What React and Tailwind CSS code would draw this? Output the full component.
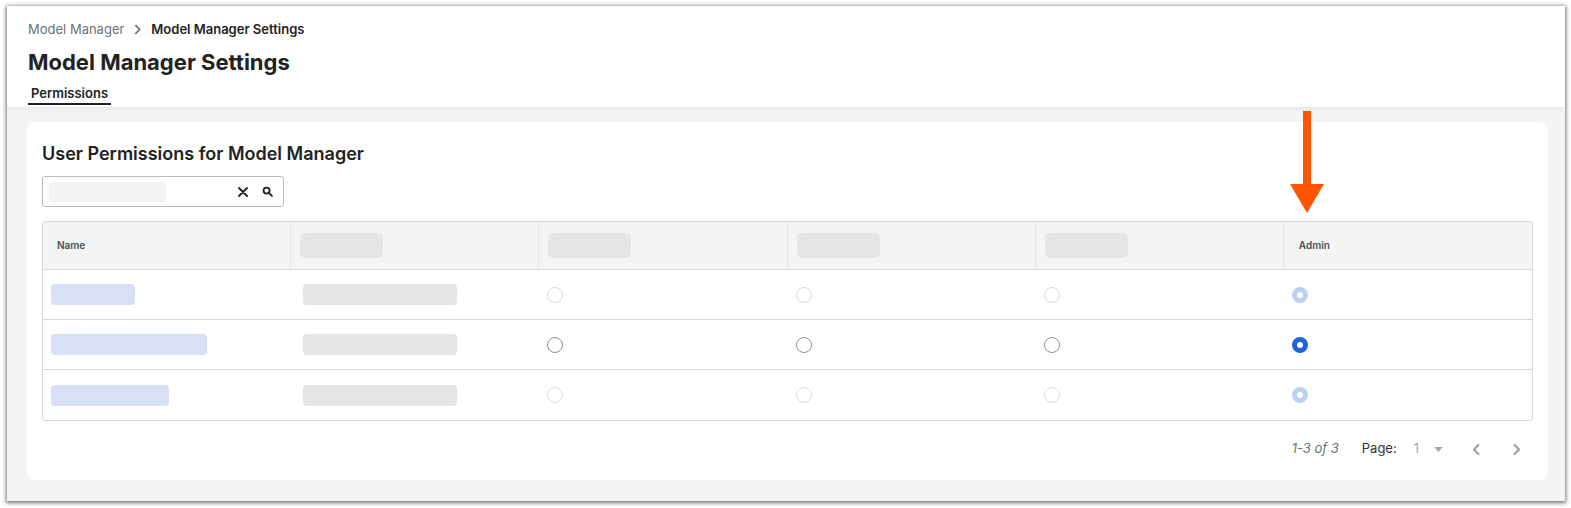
const rows = [
    { name: 135 - 51, second: 154, state: "muted" },
    { name: 207 - 51, second: 154, state: "active" },
    { name: 169 - 51, second: 154, state: "muted" },
];

function Radio({ state, checked }) {
    if (checked) {
        return (
            <span
                className={
                    "block h-[16px] w-[16px] rounded-full border-[5px] bg-white " +
                    (state === "active" ? "border-[#1f63dd]" : "border-[#bcd0f4]")
                }
            />
        );
    }
    return (
        <span
            className={
                "block h-[16px] w-[16px] rounded-full border bg-white " +
                (state === "active" ? "border-[#8a8f94]" : "border-[#d9dbdd]")
            }
        />
    );
}

function Chevron({ dir = "right", className }) {
    return (
        <svg viewBox="0 0 10 10" className={className} fill="none" stroke="currentColor" strokeWidth="1.6" strokeLinecap="round" strokeLinejoin="round">
            {dir === "right" ? <path d="M3.5 1.5 7 5l-3.5 3.5" /> : <path d="M6.5 1.5 3 5l3.5 3.5" />}
        </svg>
    );
}

export default function App() {
    return (
        <div className="h-[508px] w-[1571px] overflow-hidden bg-white pl-[7px] pt-[6px] font-['Inter',sans-serif]">
            <div className="flex h-[495px] w-[1558px] flex-col bg-white shadow-[0_1px_4px_1px_rgba(0,0,0,0.55)]">
                {/* Encabezado */}
                <div className="relative z-10 h-[101px] shrink-0 bg-white px-[21px] pt-[16px] shadow-[0_2px_4px_rgba(0,0,0,0.06)]">
                    <div className="flex h-[14px] items-center text-[13px] leading-[14px]">
                        <span className="text-[#6b7177]">Model Manager</span>
                        <Chevron className="ml-[8px] mr-[8px] h-[11px] w-[11px] text-[#6b7177]" />
                        <span className="font-semibold text-[#222]">Model Manager Settings</span>
                    </div>
                    <h1 className="mt-[14px] h-[24px] text-[22px] font-bold leading-[24px] text-[#222]">
                        Model Manager Settings
                    </h1>
                    <div className="mt-[11px] flex">
                        <div className="flex h-[20px] w-[83px] items-start justify-center border-b-2 border-[#222] pt-[1px] text-[13px] font-semibold leading-[15px] text-[#222]">
                            Permissions
                        </div>
                    </div>
                </div>

                {/* Contenido */}
                <div className="flex-1 bg-[#f3f4f4] pb-[21px] pl-[20px] pr-[17px] pt-[15px]">
                    <div className="relative h-[358px] rounded-[8px] bg-white px-[15px] pt-[21px]">
                        <h2 className="h-[22px] text-[18px] font-semibold leading-[22px] text-[#222]">
                            User Permissions for Model Manager
                        </h2>
                        <div className="mt-[11px] flex h-[31px] w-[242px] items-center rounded-[3px] border border-[#b8bcc0] pl-[6px] pr-[10px]">
                            <div className="h-[20px] w-[117px] rounded-[4px] bg-[#f2f3f3]" />
                            <svg viewBox="0 0 10 10" className="ml-auto h-[10px] w-[10px] text-[#222]" stroke="currentColor" strokeWidth="1.8" strokeLinecap="round">
                                <path d="M1 1l8 8M9 1 1 9" />
                            </svg>
                            <svg viewBox="0 0 12 12" className="ml-[14px] h-[11px] w-[11px] text-[#222]" fill="none" stroke="currentColor" strokeWidth="2" strokeLinecap="round">
                                <circle cx="5" cy="5" r="3.3" />
                                <path d="M7.6 7.6 10.8 10.8" />
                            </svg>
                        </div>

                        {/* Tabla */}
                        <div className="mt-[14px] overflow-hidden rounded-[3px] border border-[#d6d8da]">
                            <div className="grid h-[48px] grid-cols-6 border-b border-[#d6d8da] bg-[#f3f4f4]">
                                <div className="flex items-center border-r border-[#e2e4e5] pl-[14px] text-[10px] font-semibold text-[#4a4f55]">
                                    Name
                                </div>
                                {[0, 1, 2, 3].map((i) => (
                                    <div key={i} className="flex items-center border-r border-[#e2e4e5] pl-[9px]">
                                        <div className="h-[25px] w-[83px] rounded-[5px] bg-[#e4e5e6]" />
                                    </div>
                                ))}
                                <div className="flex items-center pl-[15px] text-[10px] font-semibold text-[#4a4f55]">
                                    Admin
                                </div>
                            </div>
                            {rows.map((row, idx) => (
                                <div
                                    key={idx}
                                    className={"grid h-[50px] grid-cols-6 " + (idx < rows.length - 1 ? "border-b border-[#d6d8da]" : "")}
                                >
                                    <div className="flex items-center pl-[8px]">
                                        <div className="h-[21px] rounded-[4px] bg-[#d9dff5]" style={{ width: row.name }} />
                                    </div>
                                    <div className="flex items-center pl-[12px]">
                                        <div className="h-[21px] rounded-[4px] bg-[#e4e5e6]" style={{ width: row.second }} />
                                    </div>
                                    {[0, 1, 2].map((i) => (
                                        <div key={i} className="flex items-center pl-[8px]">
                                            <Radio state={row.state} />
                                        </div>
                                    ))}
                                    <div className="flex items-center pl-[8px]">
                                        <Radio state={row.state} checked />
                                    </div>
                                </div>
                            ))}
                        </div>

                        {/* Paginación */}
                        <div className="mt-[20px] flex h-[16px] items-center justify-end pr-[10px] text-[13px]">
                            <span className="italic text-[#6b7177]">1-3 of 3</span>
                            <span className="ml-[23px] text-[#333]">Page:</span>
                            <span className="ml-[17px] text-[#a3a7ab]">1</span>
                            <svg viewBox="0 0 10 6" className="ml-[15px] h-[5px] w-[9px] text-[#a3a7ab]" fill="currentColor">
                                <path d="M0 0h10L5 6z" />
                            </svg>
                            <Chevron dir="left" className="ml-[27px] h-[13px] w-[13px] text-[#9aa0a5]" />
                            <Chevron className="ml-[27px] h-[13px] w-[13px] text-[#9aa0a5]" />
                        </div>
                    </div>
                </div>
            </div>

            {/* Flecha indicadora */}
            <svg className="absolute left-[1290px] top-[111px]" width="36" height="103" viewBox="0 0 36 103">
                <rect x="13" y="0" width="8" height="76" fill="#ff5500" />
                <path d="M0 73h34L17 102z" fill="#ff5500" />
            </svg>
        </div>
    );
}
